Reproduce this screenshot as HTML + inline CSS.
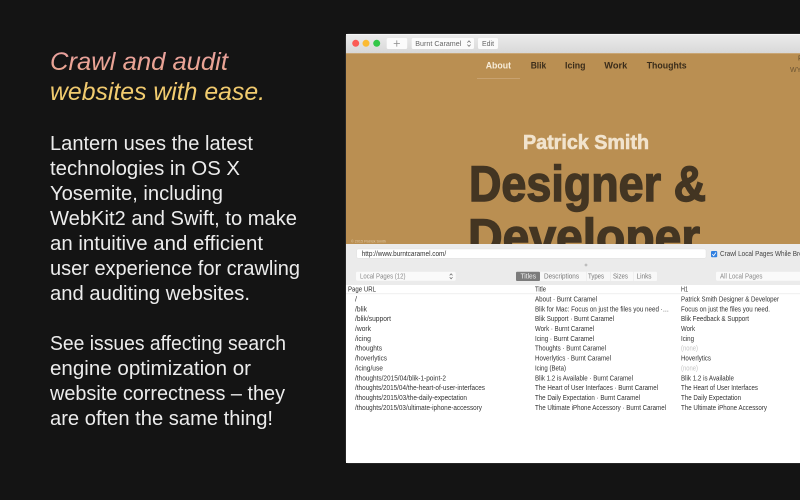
<!DOCTYPE html>
<html>
<head>
<meta charset="utf-8">
<style>
html,body{margin:0;padding:0;background:#141414;width:800px;height:500px;overflow:hidden}
svg{display:block;position:absolute;left:0;top:0}
text{font-family:"Liberation Sans",sans-serif;white-space:pre}
.b{font-size:20px;fill:#ececec}
.r{font-size:7px;fill:#333}
.n{font-size:7px;fill:#c4c4c4}
.nav{font-size:9.5px;font-weight:bold;fill:#3a2c1a}
</style>
</head>
<body>
<svg width="800" height="500" viewBox="0 0 800 500" xmlns="http://www.w3.org/2000/svg">
<defs>
<linearGradient id="h" gradientUnits="userSpaceOnUse" x1="0" y1="50" x2="0" y2="105">
<stop offset="0" stop-color="#e89f9f"/><stop offset=".4" stop-color="#eaa68f"/><stop offset=".62" stop-color="#f0c86e"/><stop offset="1" stop-color="#f2d070"/>
</linearGradient>
<linearGradient id="tb" x1="0" y1="0" x2="0" y2="1">
<stop offset="0" stop-color="#ececec"/><stop offset="1" stop-color="#d8d8d8"/>
</linearGradient>
<clipPath id="page"><rect x="346" y="53" width="454" height="191"/></clipPath>
<clipPath id="win"><rect x="346" y="34" width="454" height="429"/></clipPath>
<filter id="s" x="-5%" y="-5%" width="110%" height="110%"><feGaussianBlur stdDeviation="0.25"/></filter>
</defs>
<rect width="800" height="500" fill="#141414"/>

<!-- left copy -->
<g style="font-style:italic;font-size:25px" fill="url(#h)">
<text x="50" y="70" textLength="178" lengthAdjust="spacingAndGlyphs">Crawl and audit</text>
<text x="50" y="100" textLength="215" lengthAdjust="spacingAndGlyphs">websites with ease.</text>
</g>
<g class="lines">
<text class="b" x="50" y="150" textLength="203" lengthAdjust="spacingAndGlyphs">Lantern uses the latest</text>
<text class="b" x="50" y="175" textLength="190" lengthAdjust="spacingAndGlyphs">technologies in OS X</text>
<text class="b" x="50" y="200" textLength="173" lengthAdjust="spacingAndGlyphs">Yosemite, including</text>
<text class="b" x="50" y="225" textLength="247" lengthAdjust="spacingAndGlyphs">WebKit2 and Swift, to make</text>
<text class="b" x="50" y="250" textLength="213" lengthAdjust="spacingAndGlyphs">an intuitive and efficient</text>
<text class="b" x="50" y="275" textLength="250" lengthAdjust="spacingAndGlyphs">user experience for crawling</text>
<text class="b" x="50" y="300" textLength="200" lengthAdjust="spacingAndGlyphs">and auditing websites.</text>
<text class="b" x="50" y="350" textLength="236" lengthAdjust="spacingAndGlyphs">See issues affecting search</text>
<text class="b" x="50" y="375" textLength="201" lengthAdjust="spacingAndGlyphs">engine optimization or</text>
<text class="b" x="50" y="400" textLength="235" lengthAdjust="spacingAndGlyphs">website correctness – they</text>
<text class="b" x="50" y="425" textLength="223" lengthAdjust="spacingAndGlyphs">are often the same thing!</text>
</g>

<!-- window -->
<rect x="345.5" y="33.5" width="470" height="430" rx="3" fill="#3a3a3a"/>
<rect x="346" y="34" width="470" height="429" rx="3" fill="#fff"/>
<g clip-path="url(#win)">
<rect x="346" y="34" width="454" height="19" fill="url(#tb)"/>
<rect x="346" y="34" width="454" height="1" fill="#f6f6f6"/>
<circle cx="355.7" cy="43.3" r="3.5" fill="#fb5b55"/>
<circle cx="366" cy="43.3" r="3.5" fill="#fbbb33"/>
<circle cx="376.7" cy="43.3" r="3.5" fill="#33c748"/>
<rect x="386.7" y="38" width="20.5" height="11" rx="1.5" fill="#fbfbfb"/>
<path d="M396.8 40.4v6.2M393.7 43.5h6.2" stroke="#8a8a8a" stroke-width=".8" fill="none"/>
<rect x="411.7" y="38" width="62.3" height="11" rx="1.5" fill="#fbfbfb"/>
<text x="415.3" y="46" style="font-size:7px" fill="#666" textLength="46" lengthAdjust="spacingAndGlyphs">Burnt Caramel</text>
<path d="M467.4 42.6l1.6-1.8 1.6 1.8M467.4 44.6l1.6 1.8 1.6-1.8" stroke="#666" stroke-width=".7" fill="none"/>
<rect x="478" y="38" width="20" height="11" rx="1.5" fill="#fbfbfb"/>
<text x="482" y="46" style="font-size:7px" fill="#666" textLength="12" lengthAdjust="spacingAndGlyphs">Edit</text>

<!-- web page -->
<rect x="346" y="53" width="454" height="191" fill="#ba8f52"/>
<rect x="346" y="53" width="454" height="1" fill="#c9a675"/>
<g clip-path="url(#page)">
<rect x="477" y="78" width="43" height=".8" fill="#cba878"/>
<text class="nav" x="485.7" y="68.5" style="fill:#f7ecd9" textLength="25.3" lengthAdjust="spacingAndGlyphs">About</text>
<text class="nav" x="530.7" y="68.5" textLength="15.5" lengthAdjust="spacingAndGlyphs">Blik</text>
<text class="nav" x="565" y="68.5" textLength="20.5" lengthAdjust="spacingAndGlyphs">Icing</text>
<text class="nav" x="604.3" y="68.5" textLength="23" lengthAdjust="spacingAndGlyphs">Work</text>
<text class="nav" x="646.7" y="68.5" textLength="40" lengthAdjust="spacingAndGlyphs">Thoughts</text>
<text x="798" y="60.5" style="font-size:7px" fill="#5a4526">P</text>
<text x="790" y="72" style="font-size:7px" fill="#6d5634">WY</text>
<text x="523" y="149" style="font-size:20px;font-weight:bold" fill="#f1e3cd" stroke="#f1e3cd" stroke-width=".6" textLength="126" lengthAdjust="spacingAndGlyphs">Patrick Smith</text>
<text x="469" y="201" style="font-size:50px;font-weight:bold" fill="#433522" stroke="#433522" stroke-width="1.4" textLength="237" lengthAdjust="spacingAndGlyphs">Designer &amp;</text>
<text x="468" y="254" style="font-size:50px;font-weight:bold" fill="#433522" stroke="#433522" stroke-width="1.4" textLength="232" lengthAdjust="spacingAndGlyphs">Developer</text>
<text x="351" y="242.5" style="font-size:4px" fill="#e0cba8" textLength="35" lengthAdjust="spacingAndGlyphs">© 2015 Patrick Smith</text>
</g>

<!-- control panel -->
<rect x="346" y="244" width="454" height="41" fill="#ebebeb"/>
<rect x="356.7" y="249" width="349.3" height="9.3" rx="1.5" fill="#fff" stroke="#dcdcdc" stroke-width=".4"/>
<text x="361.7" y="256.2" style="font-size:7px" fill="#333" textLength="84.5" lengthAdjust="spacingAndGlyphs">http://www.burntcaramel.com/</text>
<rect x="711" y="251" width="6.2" height="6.2" rx="1" fill="#2f7fe0"/>
<path d="M712.3 254.2l1.4 1.5 2.2-3.2" stroke="#fff" stroke-width=".8" fill="none"/>
<text x="720" y="256.2" style="font-size:7px" fill="#444" textLength="99" lengthAdjust="spacingAndGlyphs">Crawl Local Pages While Browsing</text>
<circle cx="586" cy="265" r="1.4" fill="#bdbdbd"/>
<rect x="356" y="271.7" width="99.7" height="9" rx="1.5" fill="#fafafa"/>
<text x="360" y="278.6" style="font-size:7px" fill="#8a8a8a" textLength="45.5" lengthAdjust="spacingAndGlyphs">Local Pages (12)</text>
<path d="M449.7 275.4l1.4-1.6 1.4 1.6M449.7 277.2l1.4 1.6 1.4-1.6" stroke="#666" stroke-width=".7" fill="none"/>
<rect x="516" y="271.7" width="141" height="9.3" rx="1" fill="#f8f8f8"/>
<rect x="516" y="271.7" width="24" height="9.3" rx="1" fill="#7b7b7b"/>
<text x="520.5" y="278.7" style="font-size:7px" fill="#eee" textLength="15.5" lengthAdjust="spacingAndGlyphs">Titles</text>
<text x="544" y="278.7" style="font-size:7px" fill="#777" textLength="35" lengthAdjust="spacingAndGlyphs">Descriptions</text>
<text x="588" y="278.7" style="font-size:7px" fill="#777" textLength="16" lengthAdjust="spacingAndGlyphs">Types</text>
<text x="613" y="278.7" style="font-size:7px" fill="#777" textLength="15" lengthAdjust="spacingAndGlyphs">Sizes</text>
<text x="636.5" y="278.7" style="font-size:7px" fill="#777" textLength="15" lengthAdjust="spacingAndGlyphs">Links</text>
<rect x="586" y="271.7" width=".5" height="9.3" fill="#e6e6e6"/>
<rect x="610" y="271.7" width=".5" height="9.3" fill="#e6e6e6"/>
<rect x="633" y="271.7" width=".5" height="9.3" fill="#e6e6e6"/>
<rect x="716" y="271.7" width="90" height="9" rx="1.5" fill="#fafafa"/>
<text x="720" y="278.6" style="font-size:7px" fill="#8a8a8a" textLength="42.5" lengthAdjust="spacingAndGlyphs">All Local Pages</text>

<!-- table -->
<rect x="346" y="285" width="454" height="178" fill="#fff"/>
<rect x="346" y="293.5" width="454" height=".6" fill="#e4e4e4"/>
<g filter="url(#s)">
<text class="r" x="348" y="291.5" textLength="28" lengthAdjust="spacingAndGlyphs">Page URL</text>
<text class="r" x="535" y="291.5" textLength="11" lengthAdjust="spacingAndGlyphs">Title</text>
<text class="r" x="681" y="291.5" textLength="7" lengthAdjust="spacingAndGlyphs">H1</text>

<text class="r" x="355" y="301.5">/</text>
<text class="r" x="355" y="311.5" textLength="12" lengthAdjust="spacingAndGlyphs">/blik</text>
<text class="r" x="355" y="321.2" textLength="36" lengthAdjust="spacingAndGlyphs">/blik/support</text>
<text class="r" x="355" y="331" textLength="16" lengthAdjust="spacingAndGlyphs">/work</text>
<text class="r" x="355" y="341" textLength="16" lengthAdjust="spacingAndGlyphs">/icing</text>
<text class="r" x="355" y="350.7" textLength="27" lengthAdjust="spacingAndGlyphs">/thoughts</text>
<text class="r" x="355" y="360.5" textLength="32" lengthAdjust="spacingAndGlyphs">/hoverlytics</text>
<text class="r" x="355" y="370.5" textLength="28" lengthAdjust="spacingAndGlyphs">/icing/use</text>
<text class="r" x="355" y="380.5" textLength="91" lengthAdjust="spacingAndGlyphs">/thoughts/2015/04/blik-1-point-2</text>
<text class="r" x="355" y="390.2" textLength="130" lengthAdjust="spacingAndGlyphs">/thoughts/2015/04/the-heart-of-user-interfaces</text>
<text class="r" x="355" y="400.2" textLength="112" lengthAdjust="spacingAndGlyphs">/thoughts/2015/03/the-daily-expectation</text>
<text class="r" x="355" y="410" textLength="127" lengthAdjust="spacingAndGlyphs">/thoughts/2015/03/ultimate-iphone-accessory</text>

<text class="r" x="535" y="301.5" textLength="62" lengthAdjust="spacingAndGlyphs">About · Burnt Caramel</text>
<text class="r" x="535" y="311.5" textLength="134" lengthAdjust="spacingAndGlyphs">Blik for Mac: Focus on just the files you need ·…</text>
<text class="r" x="535" y="321.2" textLength="79" lengthAdjust="spacingAndGlyphs">Blik Support · Burnt Caramel</text>
<text class="r" x="535" y="331" textLength="59" lengthAdjust="spacingAndGlyphs">Work · Burnt Caramel</text>
<text class="r" x="535" y="341" textLength="59" lengthAdjust="spacingAndGlyphs">Icing · Burnt Caramel</text>
<text class="r" x="535" y="350.7" textLength="71" lengthAdjust="spacingAndGlyphs">Thoughts · Burnt Caramel</text>
<text class="r" x="535" y="360.5" textLength="76" lengthAdjust="spacingAndGlyphs">Hoverlytics · Burnt Caramel</text>
<text class="r" x="535" y="370.5" textLength="31" lengthAdjust="spacingAndGlyphs">Icing (Beta)</text>
<text class="r" x="535" y="380.5" textLength="98" lengthAdjust="spacingAndGlyphs">Blik 1.2 is Available · Burnt Caramel</text>
<text class="r" x="535" y="390.2" textLength="123" lengthAdjust="spacingAndGlyphs">The Heart of User Interfaces · Burnt Caramel</text>
<text class="r" x="535" y="400.2" textLength="105" lengthAdjust="spacingAndGlyphs">The Daily Expectation · Burnt Caramel</text>
<text class="r" x="535" y="410" textLength="131" lengthAdjust="spacingAndGlyphs">The Ultimate iPhone Accessory · Burnt Caramel</text>

<text class="r" x="681" y="301.5" textLength="98" lengthAdjust="spacingAndGlyphs">Patrick Smith Designer &amp; Developer</text>
<text class="r" x="681" y="311.5" textLength="89" lengthAdjust="spacingAndGlyphs">Focus on just the files you need.</text>
<text class="r" x="681" y="321.2" textLength="68" lengthAdjust="spacingAndGlyphs">Blik Feedback &amp; Support</text>
<text class="r" x="681" y="331" textLength="14" lengthAdjust="spacingAndGlyphs">Work</text>
<text class="r" x="681" y="341" textLength="13" lengthAdjust="spacingAndGlyphs">Icing</text>
<text class="n" x="681" y="350.7" textLength="17" lengthAdjust="spacingAndGlyphs">(none)</text>
<text class="r" x="681" y="360.5" textLength="30" lengthAdjust="spacingAndGlyphs">Hoverlytics</text>
<text class="n" x="681" y="370.5" textLength="17" lengthAdjust="spacingAndGlyphs">(none)</text>
<text class="r" x="681" y="380.5" textLength="53" lengthAdjust="spacingAndGlyphs">Blik 1.2 is Available</text>
<text class="r" x="681" y="390.2" textLength="77" lengthAdjust="spacingAndGlyphs">The Heart of User Interfaces</text>
<text class="r" x="681" y="400.2" textLength="60" lengthAdjust="spacingAndGlyphs">The Daily Expectation</text>
<text class="r" x="681" y="410" textLength="86" lengthAdjust="spacingAndGlyphs">The Ultimate iPhone Accessory</text>
</g>
</g>
</svg>
</body>
</html>
